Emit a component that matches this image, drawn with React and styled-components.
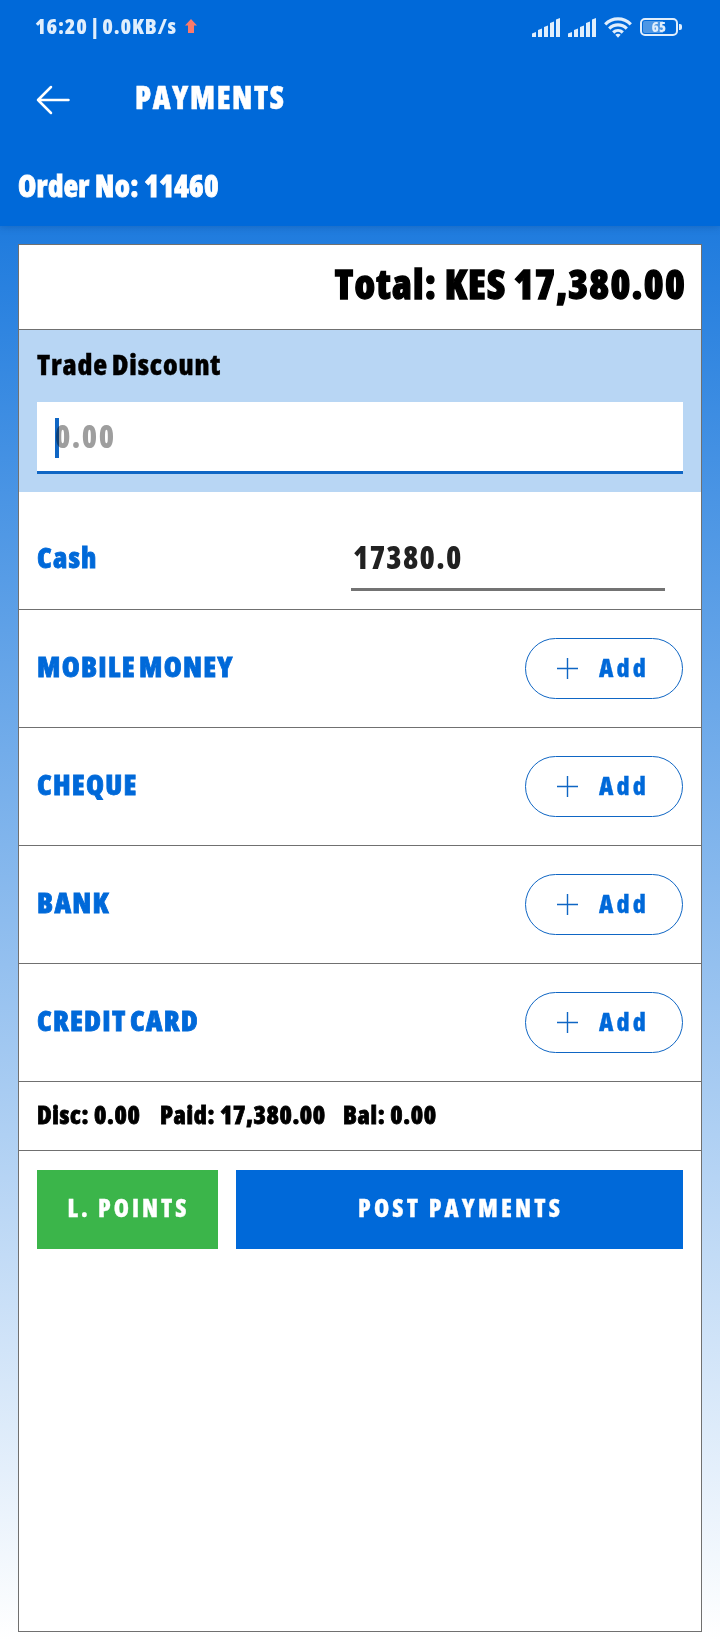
import React from "react";
import styled, { createGlobalStyle } from "styled-components";

const methods = ["MOBILE MONEY", "CHEQUE", "BANK", "CREDIT CARD"];

const Signal = () => <svg width="28" height="19" viewBox="0 0 28 19" fill="#e0eefc">
    <path d="M0 15.500 4 14v5H0zM6 12l4-1.500V19H6zM12 9l4-1.500V19h-4zM18 5l4-1.500V19h-4zM24 1.500 28 0v19h-4z" />
</svg>;

const Wifi = () => <svg width="28" height="21" viewBox="0 0 28 21" fill="none" stroke="#e0eefc" strokeWidth="3.200">
    <path d="M1.200 7.300C8.500.1 19.500.1 26.800 7.300" />
    <path d="M5.200 11.600c5-4.900 12.600-4.900 17.600 0" />
    <path d="M9.200 15.500c2.800-2.700 6.800-2.700 9.600 0" />
    <path d="M11.300 17.800c1.500-1.400 3.900-1.400 5.400 0L14 20.700z" fill="#e0eefc" stroke="none" />
</svg>;

const Arrow = () => <svg width="34" height="30" viewBox="0 0 34 30" fill="none" stroke="#fff" strokeWidth="2.500" strokeLinecap="round" strokeLinejoin="round">
    <path d="M15 2 2 15l13 13M2 15h30.500" />
</svg>;

const Plus = () => <svg width="21" height="21" viewBox="0 0 21 21" fill="none" stroke="#0f66c4" strokeWidth="1.400">
    <path d="M10.500 0v21M0 10.500h21" />
</svg>;

const App = () => <Screen>
    <GlobalStyle />
    <Header>
        <StatusBar>
            <Clock>16:20 | 0.0KB/s</Clock>
            <Upload width="12" height="14" viewBox="0 0 12 14"><path d="M6 0l6 6.500H9V14H3V6.500H0z" fill="#fb7a6b" /></Upload>
            <StatusIcons>
                <Signal />
                <Signal />
                <Wifi />
                <Battery><Level>65</Level></Battery>
            </StatusIcons>
        </StatusBar>
        <TitleBar>
            <Arrow />
            <Title>PAYMENTS</Title>
        </TitleBar>
        <OrderNo>Order No: 11460</OrderNo>
    </Header>
    <Card>
        <Total>Total: KES 17,380.00</Total>
        <Discount>
            <DiscountLabel>Trade Discount</DiscountLabel>
            <DiscountInput>0.00<Caret /></DiscountInput>
        </Discount>
        <CashRow>
            <CashLabel>Cash</CashLabel>
            <CashInput>17380.0</CashInput>
        </CashRow>
        {methods.map((name) => <MethodRow key={name}>
            <MethodLabel>{name}</MethodLabel>
            <AddButton><Plus /><span>Add</span></AddButton>
        </MethodRow>)}
        <Summary>
            <SummaryItem $width="123px">Disc: 0.00</SummaryItem>
            <SummaryItem $width="183px">Paid: 17,380.00</SummaryItem>
            <SummaryItem>Bal: 0.00</SummaryItem>
        </Summary>
        <Actions>
            <Action $color="#3bb54a" $spacing="3px">L. POINTS</Action>
            <Action $color="#0069d9" $spacing="3.200px">POST PAYMENTS</Action>
        </Actions>
    </Card>
</Screen>;

export default App;

const GlobalStyle = createGlobalStyle`
    * {
        box-sizing: border-box;
    }

    body {
        margin: 0;
        font-family: "Open Sans", "Noto Sans", sans-serif;
        font-weight: 800;
        font-stretch: 75%;
    }
`;

const Screen = styled.div`
    height: 1650px;
    display: flex;
    flex-direction: column;
    background: linear-gradient(#0069d9 30px, #fff 1640px);
`;

const Header = styled.header`
    height: 226px;
    background: #0069d9;
    color: white;
    box-shadow: 0 0 8px rgba(0, 50, 110, .3);
`;

const StatusBar = styled.div`
    height: 52px;
    padding: 0 38px 0 35px;
    display: flex;
    align-items: center;
    color: #e0eefc;
`;

const Clock = styled.span`
    padding-bottom: 1px;
    font-size: 21.500px;
    letter-spacing: .85px;
    word-spacing: -2.300px;
    white-space: nowrap;
`;

const Upload = styled.svg`
    margin-left: 8px;
`;

const StatusIcons = styled.div`
    margin-left: auto;
    display: flex;
    align-items: center;
    gap: 8px;
    padding-top: 2px;
`;

const Battery = styled.div`
    position: relative;
    width: 38px;
    height: 18px;
    margin-right: 4px;
    border: 2px solid #e0eefc;
    border-radius: 5px;
    display: flex;

    &::after {
        content: "";
        position: absolute;
        right: -6px;
        top: 4px;
        width: 3px;
        height: 6px;
        border-radius: 0 2px 2px 0;
        background: #e0eefc;
    }
`;

const Level = styled.span`
    flex: 1;
    margin: 1px;
    border-radius: 2px;
    background: linear-gradient(90deg, #4d97e5 62%, transparent 62%);
    font-size: 14px;
    letter-spacing: .3px;
    line-height: 11px;
    text-align: center;
`;

const TitleBar = styled.div`
    height: 96px;
    padding-left: 36px;
    display: flex;
    align-items: center;
`;

const Title = styled.h1`
    margin: 0 0 0 65px;
    padding-bottom: 6px;
    font-size: 31px;
    font-weight: 800;
    letter-spacing: 1.600px;
    -webkit-text-stroke: .5px;
`;

const OrderNo = styled.div`
    padding-left: 18px;
    font-size: 29.500px;
    letter-spacing: .3px;
    line-height: 76px;
    -webkit-text-stroke: .8px;
`;

const Card = styled.main`
    width: 684px;
    height: 1388px;
    margin: 18px;
    border: 1px solid #707070;
    background: white;
`;

const Total = styled.div`
    height: 85px;
    padding-right: 15px;
    border-bottom: 1px solid #707070;
    font-size: 40px;
    letter-spacing: 1.300px;
    word-spacing: -1px;
    line-height: 77px;
    text-align: right;
    -webkit-text-stroke: 1.300px;
`;

const Discount = styled.div`
    height: 162px;
    padding: 16px 18px 18px;
    background: #b8d6f4;
`;

const DiscountLabel = styled.div`
    font-size: 28.500px;
    letter-spacing: .85px;
    word-spacing: -2px;
    line-height: 36px;
    -webkit-text-stroke: .4px;
`;

const DiscountInput = styled.div`
    position: relative;
    height: 72px;
    margin-top: 20px;
    padding-left: 18px;
    border-bottom: 3px solid #0f66c4;
    background: white;
    color: #9e9e9e;
    font-size: 31px;
    letter-spacing: 1.500px;
    line-height: 69px;
`;

const Caret = styled.span`
    position: absolute;
    left: 18px;
    top: 16px;
    width: 4px;
    height: 40px;
    background: #0f66c4;
    mix-blend-mode: multiply;
`;

const CashRow = styled.div`
    height: 118px;
    padding: 0 36px 18px 18px;
    border-bottom: 1px solid #707070;
    display: flex;
    justify-content: space-between;
    align-items: flex-end;
`;

const CashLabel = styled.div`
    padding-bottom: 6px;
    color: #0069d9;
    font-size: 29px;
    letter-spacing: 1.200px;
    line-height: 56px;
    -webkit-text-stroke: .8px;
`;

const CashInput = styled.div`
    width: 314px;
    height: 63px;
    padding-left: 2px;
    border-bottom: 3px solid #737373;
    color: #212121;
    font-size: 31px;
    letter-spacing: 1.300px;
    line-height: 58px;
`;

const MethodRow = styled.div`
    height: 118px;
    padding: 0 18px;
    border-bottom: 1px solid #707070;
    display: flex;
    justify-content: space-between;
    align-items: center;
`;

const MethodLabel = styled.div`
    padding-bottom: 6px;
    color: #0069d9;
    font-size: 29px;
    letter-spacing: 1.250px;
    word-spacing: -3px;
    -webkit-text-stroke: .8px;
`;

const AddButton = styled.button`
    width: 158px;
    height: 61px;
    padding: 0 0 0 31px;
    border: 1px solid #0f66c4;
    border-radius: 31px;
    background: white;
    color: #0069d9;
    display: flex;
    align-items: center;
    gap: 21px;
    font-family: inherit;
    font-size: 25px;
    font-weight: 800;
    font-stretch: 75%;
    letter-spacing: 3.200px;
    -webkit-text-stroke: .3px;

    span {
        padding-bottom: 4px;
    }
`;

const Summary = styled.div`
    height: 69px;
    padding-left: 18px;
    border-bottom: 1px solid #707070;
    display: flex;
    font-size: 25px;
    letter-spacing: .6px;
    line-height: 65px;
    -webkit-text-stroke: .8px;
`;

const SummaryItem = styled.span`
    width: ${p => p.$width || "auto"};
    white-space: nowrap;
`;

const Actions = styled.div`
    padding: 19px 18px;
    display: grid;
    grid-template-columns: 181px 1fr;
    gap: 18px;
`;

const Action = styled.button`
    height: 79px;
    padding: 0 0 4px 2px;
    border: 0;
    background: ${p => p.$color};
    color: white;
    font-family: inherit;
    font-size: 24.500px;
    font-weight: 800;
    font-stretch: 75%;
    letter-spacing: ${p => p.$spacing};
    -webkit-text-stroke: .3px;
`;
